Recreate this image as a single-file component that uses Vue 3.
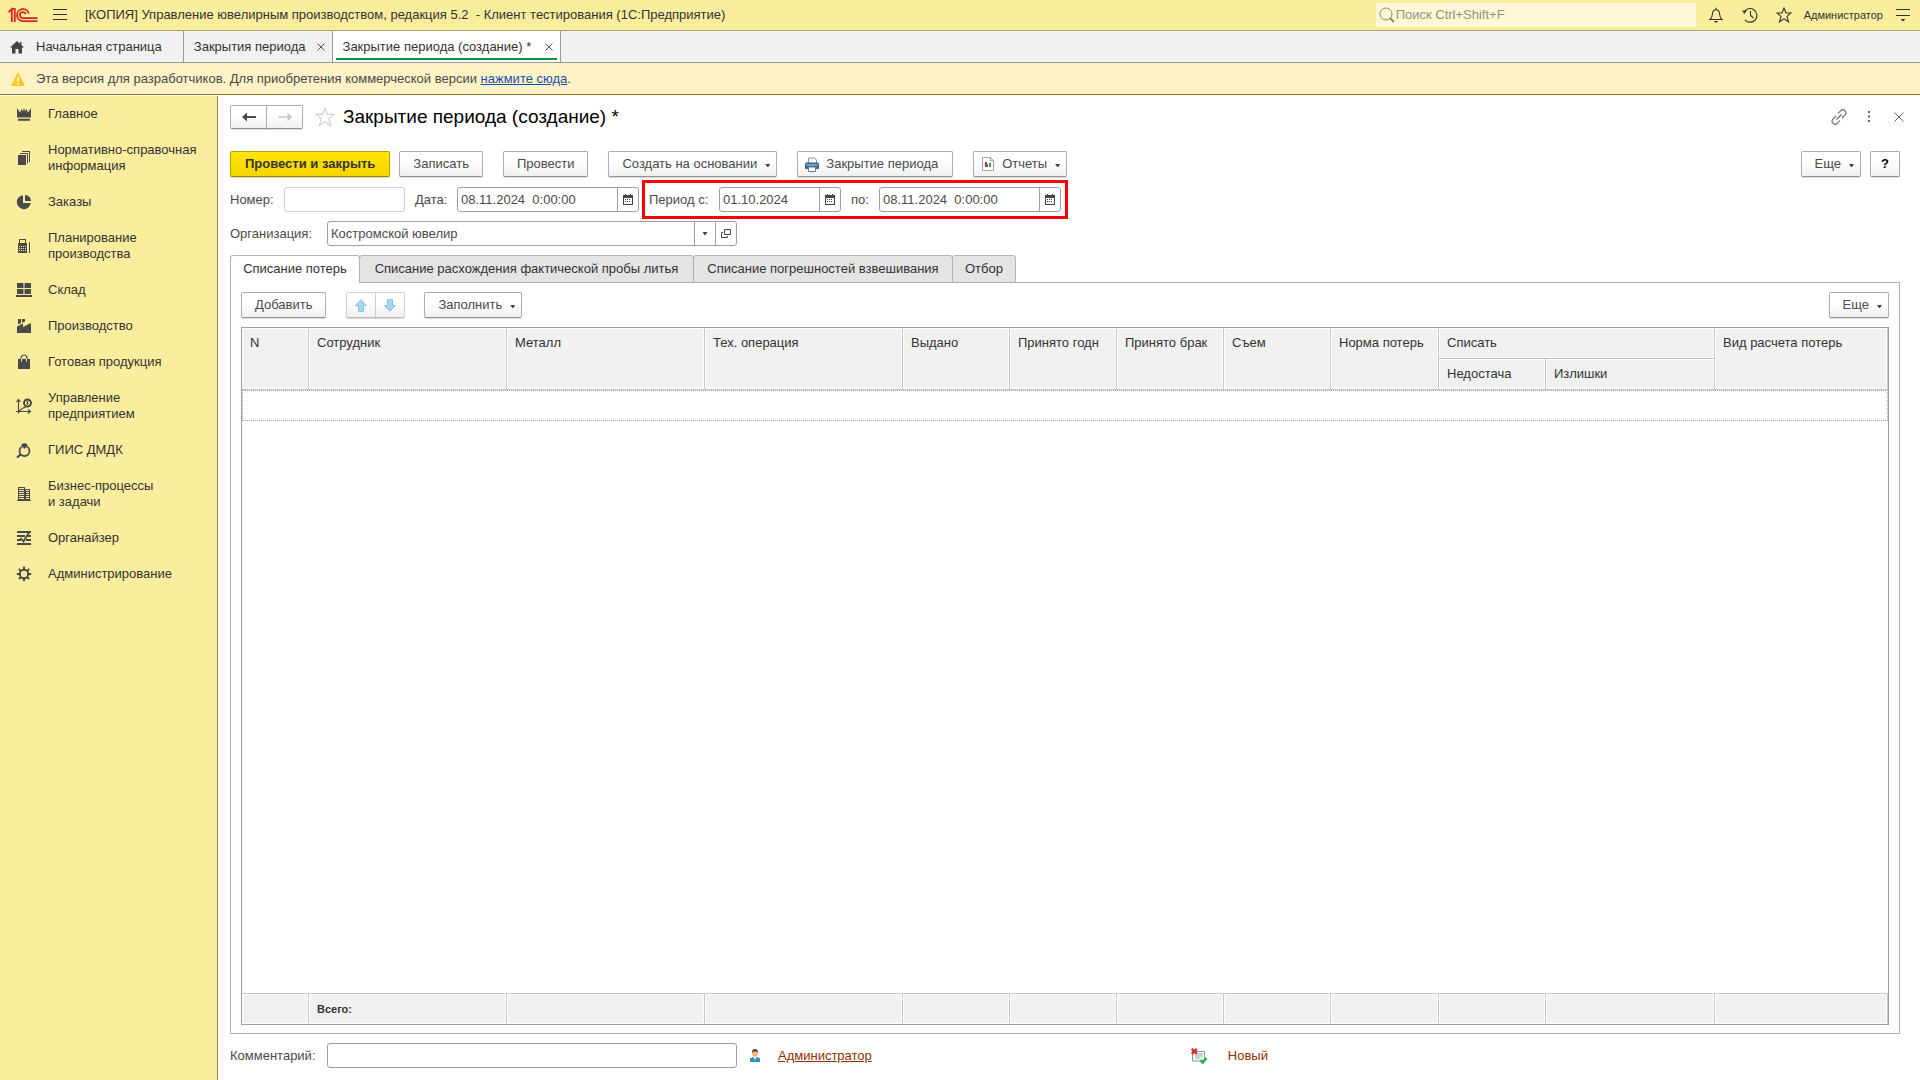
<script setup>
import { ref } from 'vue'

const sections = [
  { icon: 'crown', lines: ['Главное'] },
  { icon: 'books', lines: ['Нормативно-справочная', 'информация'] },
  { icon: 'pie', lines: ['Заказы'] },
  { icon: 'calc', lines: ['Планирование', 'производства'] },
  { icon: 'stock', lines: ['Склад'] },
  { icon: 'factory', lines: ['Производство'] },
  { icon: 'bag', lines: ['Готовая продукция'] },
  { icon: 'chart', lines: ['Управление', 'предприятием'] },
  { icon: 'ring', lines: ['ГИИС ДМДК'] },
  { icon: 'building', lines: ['Бизнес-процессы', 'и задачи'] },
  { icon: 'organizer', lines: ['Органайзер'] },
  { icon: 'gear', lines: ['Администрирование'] },
]

const pages = ['Списание потерь', 'Списание расхождения фактической пробы литья', 'Списание погрешностей взвешивания', 'Отбор']
const activePage = ref(0)

const columns = ['N', 'Сотрудник', 'Металл', 'Тех. операция', 'Выдано', 'Принято годн', 'Принято брак', 'Съем', 'Норма потерь']

const number = ref('')
const date = ref('08.11.2024  0:00:00')
const periodFrom = ref('01.10.2024')
const periodTo = ref('08.11.2024  0:00:00')
const organization = ref('Костромской ювелир')
const comment = ref('')

const calendarFrame = 'M0 1h2V0h1v1h4V0h1v1h2v10H0zM1 4v6h8V4z'
const calendarDays = 'M2 5.5h6M2 7.5h6'
</script>

<template>
  <div class="app">
    <header class="titlebar">
      <svg class="logo" width="30" height="16" viewBox="0 0 30 16" fill="none" stroke="#d9241c" stroke-width="1.8">
        <path d="M.5 5.200 3.800 2V15M6.800 15V1.900H3.500" />
        <path d="M20.800 6.400A6 6 0 1 0 15 14.100H29.500" />
        <path d="M17.800 7.200A3 3 0 1 0 15 11.100H29.500" />
      </svg>
      <button class="icon-btn burger" aria-label="Меню">
        <svg width="14" height="12" viewBox="0 0 14 12" stroke="#333" stroke-width="1"><path d="M0 .5h14M0 5.5h14M0 10.5h14" /></svg>
      </button>
      <span class="app-title">[КОПИЯ] Управление ювелирным производством, редакция 5.2&nbsp; - Клиент тестирования (1С:Предприятие)</span>
      <label class="search">
        <svg width="16" height="16" viewBox="0 0 16 16" fill="none" stroke="#8d8a72"><circle cx="7" cy="7" r="6" /><path d="M11 11l4 4" stroke-width="2" /></svg>
        <input type="text" aria-label="Поиск" placeholder="Поиск Ctrl+Shift+F" />
      </label>
      <button class="icon-btn" aria-label="Оповещения">
        <svg width="16" height="16" viewBox="0 0 16 16" fill="none" stroke="#333" stroke-width="1.1"><path d="M1 12.5h14M2.5 12.3C4 10.5 4.200 9 4.500 6.500 4.800 4 6 2.800 8 2.800s3.200 1.200 3.500 3.700c.3 2.500.5 4 2 5.800M8 .8v2" /><path d="M6 14h4l-1 1.500H7z" fill="#333" stroke="none" /></svg>
      </button>
      <button class="icon-btn" aria-label="История">
        <svg width="16" height="16" viewBox="0 0 16 16" fill="none" stroke="#333" stroke-width="1.1"><path d="M2 5.500A6.800 6.800 0 1 1 3 12.800M8.500 4v4.500l3 2.500" /><path d="M.2 3.500h4.600L2.300 7z" fill="#333" stroke="none" /></svg>
      </button>
      <button class="icon-btn" aria-label="Избранное">
        <svg width="16" height="16" viewBox="0 0 16 16" fill="none" stroke="#333" stroke-width="1.100"><path d="M8 1l2 5h5l-4 3.400 1.500 5.400L8 11.800l-4.500 3L5 9.400 1 6h5z" /></svg>
      </button>
      <a class="user" href="#">Администратор</a>
      <button class="icon-btn" aria-label="Настройки">
        <svg width="14" height="14" viewBox="0 0 14 14"><path d="M0 1.500h14M0 7.500h14" stroke="#333" /><path d="M4.500 11h5L7 13.500z" fill="#333" /></svg>
      </button>
    </header>

    <nav class="windows">
      <a class="window home" href="#">
        <svg width="14" height="14" viewBox="0 0 14 14" fill="#444"><path d="M7 1 0 7.500h2V13.500h3.500V9h3v4.500H12V7.500h2L11.500 5.100V2h-1.500v1.700z" /></svg>
        <span>Начальная страница</span>
      </a>
      <a class="window" href="#">
        <span>Закрытия периода</span>
        <svg width="8" height="8" viewBox="0 0 8 8" stroke="#555"><path d="M.5.5l7 7M7.500.5l-7 7" /></svg>
      </a>
      <a class="window current" href="#">
        <span>Закрытие периода (создание) *</span>
        <svg width="8" height="8" viewBox="0 0 8 8" stroke="#555"><path d="M.5.5l7 7M7.500.5l-7 7" /></svg>
      </a>
    </nav>

    <div class="notice">
      <svg width="14" height="14" viewBox="0 0 14 14"><path d="M7 0l7 14H0z" fill="#fdc820" /><path d="M6.200 5h1.600v4.500H6.200zM6.200 10.800h1.600v1.600H6.200z" fill="#fff" /></svg>
      <p>Эта версия для разработчиков. Для приобретения коммерческой версии <a href="#">нажмите сюда</a>.</p>
    </div>

    <div class="body">
      <aside class="sidebar">
        <a v-for="s in sections" :key="s.icon" class="section" href="#">
          <svg class="section-icon" width="16" height="16" viewBox="0 0 16 16" fill="#4a4a4a">
            <path v-if="s.icon === 'crown'" d="M1 2l3 4.500L5.500 3 7 5.500 8 1.500l1 4L10.500 3 12 6.500 15 2v9.500H1zM2 12.800h12v2H2z" />
            <g v-else-if="s.icon === 'books'"><path d="M2 5h8v10H2zM4 3h8v10.500h-1V4H4zM6 1h8v11h-1V2H6z" /></g>
            <g v-else-if="s.icon === 'pie'"><path d="M7 1.200V9h7.800A7 7 0 1 1 7 1.200z" /><path d="M9 1a6 6 0 0 1 6 6H9z" /></g>
            <g v-else-if="s.icon === 'calc'">
              <path fill-rule="evenodd" d="M2 5h1V1h7v4h1v10H2zM4 2v3h5V2zM3 8v1h1V8zm2 0v1h1V8zm2 0v1h1V8zm2 0v1h1V8zm-6 2v1h1v-1zm2 0v1h1v-1zm2 0v1h1v-1zm2 0v1h1v-1zm-6 2v1h1v-1zm2 0v1h1v-1zm2 0v1h1v-1zm2 0v1h1v-1z" />
              <path d="M13 4h1v11h-1z" />
            </g>
            <path v-else-if="s.icon === 'stock'" d="M1 1h6.500v5H1zM8.500 1H15v5H8.500zM1 7h6.500v5H1zM8.500 7H15v5H8.500zM0 13h16v2H0z" />
            <path v-else-if="s.icon === 'factory'" d="M2 1h3v4L2 6.500zM6 1h3v2.500L6 4.800zM1 8.500l6-3V9l8-4v10H1z" />
            <g v-else-if="s.icon === 'bag'"><path d="M2 5h12v10H2z" /><path d="M5 5V4a3 3 0 0 1 6 0v1" fill="none" stroke="#4a4a4a" stroke-width="1.200" /><path d="M5.500 5v2.500M10.500 5v2.500" stroke="#fbed9e" /></g>
            <g v-else-if="s.icon === 'chart'" fill="none" stroke="#4a4a4a">
              <path d="M2.500 15.500V2M.5 4l2-2.500 2 2.500M0 13.500h14M12 11.500l2.500 2-2.500 2M3 13l4-3 3-1" stroke-width="1.200" />
              <circle cx="11.500" cy="5" r="3.500" stroke-width="2" /><path d="M10.500 3.500h2M10.500 5.500h2M11.500 3v4" />
            </g>
            <g v-else-if="s.icon === 'ring'"><circle cx="8.500" cy="9" r="5" fill="none" stroke="#4a4a4a" stroke-width="1.800" /><path d="M5 4V3l2-2h3l2 2v1L8.500 7z" stroke="#fbed9e" stroke-width=".6" /><path d="M4.500 12.500 1 15.500" stroke="#4a4a4a" stroke-width="2.200" /></g>
            <path v-else-if="s.icon === 'building'" fill-rule="evenodd" d="M2 1h7v2h5v11h1v1H1v-1h1zM3 2v1h5V2zm0 2v1h5V4zm0 2v1h5V6zm0 2v1h5V8zm0 2v1h5v-1zm0 2v1h5v-1zM10 4v1h3V4zm0 2v1h3V6zm0 2v1h3V8zm0 2v1h3v-1zm0 2v1h3v-1z" />
            <g v-else-if="s.icon === 'organizer'"><path d="M1 1h14v2H1zM1 5h8v2H1zM12 5h3v2h-3zM1 9h4v2H1zM10 9h5v2h-5zM1 13h14v2H1z" /><path d="M4.500 8l3 3.500L13 2.500" fill="none" stroke="#4a4a4a" stroke-width="1.800" /></g>
            <g v-else fill="none" stroke="#4a4a4a"><circle cx="8" cy="8" r="4.200" stroke-width="2" /><path d="M8 .8v2.400M8 12.800v2.400M.8 8h2.400M12.800 8h2.400M2.900 2.900l1.700 1.700M11.400 11.400l1.700 1.700M2.900 13.100l1.700-1.700M11.400 4.600l1.700-1.700" stroke-width="2" /></g>
          </svg>
          <span><template v-for="(line, i) in s.lines" :key="line"><br v-if="i" />{{ line }}</template></span>
        </a>
      </aside>

      <main class="form">
        <div class="form-head">
          <div class="pair">
            <button class="btn nav-btn" aria-label="Назад"><svg width="14" height="10" viewBox="0 0 14 10"><path d="M5 .5V4h9v2H5v3.500L0 5z" fill="#4a4a4a" /></svg></button>
            <button class="btn nav-btn" aria-label="Вперед" disabled><svg width="14" height="10" viewBox="0 0 14 10"><path d="M9.500 .5V4.300H0v1.400h9.500v3.800L14 5z" fill="#c6c6c6" /></svg></button>
          </div>
          <button class="icon-btn fav" aria-label="В избранное">
            <svg width="20" height="20" viewBox="0 0 20 20" fill="none" stroke="#cfcfcf" stroke-width="1.100"><path d="M10 1l2.400 6.400H19l-5.300 4.200 2 7L10 14.600l-5.700 4 2-7L1 7.400h6.600z" /></svg>
          </button>
          <h1>Закрытие периода (создание) *</h1>
          <div class="head-tools">
            <button class="icon-btn" aria-label="Ссылка"><svg width="16" height="16" viewBox="0 0 16 16" fill="none" stroke="#666" stroke-width="1.100"><path d="M7 4.500l2.500-2.700a2.900 2.900 0 0 1 4.600 0 3 3 0 0 1 0 4L11 9M9 11.500l-2.500 2.700a2.900 2.900 0 0 1-4.600 0 3 3 0 0 1 0-4L5 7M5.500 10.500l5-5" /></svg></button>
            <button class="icon-btn dots" aria-label="Дополнительно"><svg width="4" height="12" viewBox="0 0 4 12" fill="#666"><path d="M1 0h2v2H1zM1 4.500h2v2H1zM1 9h2v2H1z" /></svg></button>
            <button class="icon-btn" aria-label="Закрыть"><svg width="10" height="10" viewBox="0 0 10 10" stroke="#666"><path d="M.5.5l9 9M9.500.5l-9 9" /></svg></button>
          </div>
        </div>

        <div class="commands">
          <button class="btn primary">Провести и закрыть</button>
          <button class="btn">Записать</button>
          <button class="btn spaced">Провести</button>
          <button class="btn menu spaced">Создать на основании<i class="caret"></i></button>
          <button class="btn print spaced">
            <svg width="14" height="15" viewBox="0 0 14 15"><path d="M3.500 6V1h6l2 2v3" fill="#fff" stroke="#7c93a6" /><path d="M1 5.500h12l1 1.500v5H0V7z" fill="#376a94" /><path d="M1.500 8h11" stroke="#b9d3e6" /><path d="M3.500 10h7v4.500h-7z" fill="#fff" stroke="#5c7f9b" /></svg>
            Закрытие периода
          </button>
          <button class="btn menu spaced reports">
            <svg width="12" height="14" viewBox="0 0 12 14"><path d="M.5.5h8l3 3v10H.5z" fill="#fff" stroke="#9aa6b2" /><path d="M8.500.5v3h3" fill="none" stroke="#9aa6b2" /><path d="M3 5h2v5H3z" fill="#d8292f" /><path d="M5 7h1v3H5z" fill="#3f66b5" /><path d="M7 6h2v4H7z" fill="#2ba84a" /></svg>
            Отчеты<i class="caret"></i>
          </button>
          <button class="btn menu more">Еще<i class="caret"></i></button>
          <button class="btn help" aria-label="Справка">?</button>
        </div>

        <div class="fields">
          <label class="l-number" for="number">Номер:</label>
          <input id="number" v-model="number" class="box number" type="text" />
          <label class="l-date" for="date">Дата:</label>
          <div class="box combo datetime">
            <input id="date" v-model="date" type="text" />
            <button aria-label="Выбрать дату"><svg width="10" height="11" viewBox="0 0 10 11"><path fill-rule="evenodd" :d="calendarFrame" fill="#444" /><path :d="calendarDays" stroke="#444" stroke-dasharray="1 1" /></svg></button>
          </div>
          <div class="period">
            <label class="l-from" for="from">Период с:</label>
            <div class="box combo day">
              <input id="from" v-model="periodFrom" type="text" />
              <button aria-label="Выбрать начало"><svg width="10" height="11" viewBox="0 0 10 11"><path fill-rule="evenodd" :d="calendarFrame" fill="#444" /><path :d="calendarDays" stroke="#444" stroke-dasharray="1 1" /></svg></button>
            </div>
            <label class="l-to" for="to">по:</label>
            <div class="box combo datetime">
              <input id="to" v-model="periodTo" type="text" />
              <button aria-label="Выбрать конец"><svg width="10" height="11" viewBox="0 0 10 11"><path fill-rule="evenodd" :d="calendarFrame" fill="#444" /><path :d="calendarDays" stroke="#444" stroke-dasharray="1 1" /></svg></button>
            </div>
          </div>
        </div>

        <div class="org-row">
          <label class="l-wide" for="org">Организация:</label>
          <div class="box combo wide">
            <input id="org" v-model="organization" type="text" />
            <button aria-label="Выбрать из списка"><i class="caret flat"></i></button>
            <button aria-label="Открыть"><svg width="10" height="9" viewBox="0 0 10 9" fill="none" stroke="#444"><path d="M3.500.5h6v5h-6zM2 3.500H.5v5h6V7" /></svg></button>
          </div>
        </div>

        <div class="pages" role="tablist">
          <button v-for="(p, i) in pages" :key="p" role="tab" class="page" :class="{ active: i === activePage }" :aria-selected="i === activePage" @click="activePage = i">{{ p }}</button>
        </div>

        <section class="panel">
          <div class="panel-commands">
            <button class="btn">Добавить</button>
            <div class="pair arrows">
              <button class="btn faded" aria-label="Вверх"><svg width="12" height="13" viewBox="0 0 12 13"><path d="M6 .7 11.300 6.500H8.500v5.800h-5V6.500H.7z" fill="#a5d6f2" stroke="#8cbcd9" /></svg></button>
              <button class="btn faded" aria-label="Вниз"><svg width="12" height="13" viewBox="0 0 12 13"><path d="M6 12.300 11.300 6.500H8.500V.7h-5v5.800H.7z" fill="#a5d6f2" stroke="#8cbcd9" /></svg></button>
            </div>
            <button class="btn menu">Заполнить<i class="caret"></i></button>
            <button class="btn menu more">Еще<i class="caret"></i></button>
          </div>

          <table class="grid">
            <colgroup>
              <col class="c-n" /><col class="c-text" /><col class="c-text" /><col class="c-text" />
              <col class="c-num" /><col class="c-num" /><col class="c-num" /><col class="c-num" /><col class="c-norm" /><col class="c-num" />
              <col class="c-extra" /><col />
            </colgroup>
            <thead>
              <tr>
                <th v-for="c in columns" :key="c" rowspan="2">{{ c }}</th>
                <th colspan="2">Списать</th>
                <th rowspan="2">Вид расчета потерь</th>
              </tr>
              <tr>
                <th>Недостача</th>
                <th>Излишки</th>
              </tr>
            </thead>
            <tbody>
              <tr class="blank"><td colspan="12"></td></tr>
              <tr class="rest"><td colspan="12"></td></tr>
            </tbody>
            <tfoot>
              <tr><td></td><td>Всего:</td><td v-for="n in 10" :key="n"></td></tr>
            </tfoot>
          </table>
        </section>

        <footer class="bottom">
          <label class="l-wide" for="comment">Комментарий:</label>
          <input id="comment" v-model="comment" class="box wide" type="text" />
          <svg class="person" width="10" height="13" viewBox="0 0 10 13"><path d="M0 13V9.500L2.500 8h5L10 9.500V13z" fill="#3692c4" /><path d="M3.500 8 5 11l1.500-3z" fill="#fff" /><ellipse cx="5" cy="4.300" rx="2.700" ry="3.500" fill="#edb765" /><path d="M2 4.500C1.500 1.500 3 0 5 0s3.500 1.500 3 4.500L7 2.500H3z" fill="#4b4036" /></svg>
          <a class="author" href="#">Администратор</a>
          <svg class="state" width="16" height="16" viewBox="0 0 16 16" fill="none"><path d="M1.500 3.500h12v9.500h-12z" fill="#f4f7fb" stroke="#8195ad" /><path d="M5 6h6.500M4 8h7.500M4 10h5" stroke="#93a5bb" /><path d="M.8.8l5 5M5.800.8l-5 5" stroke="#dc2a2a" stroke-width="2.400" /><path d="M9.500 12l2.300 2.500 3.700-4.500" stroke="#20b030" stroke-width="2.400" /></svg>
          <span class="status">Новый</span>
        </footer>
      </main>
    </div>
  </div>
</template>

<style>
body {
  margin: 0;
}
</style>

<style scoped>
.app,
.app * {
  box-sizing: border-box;
}
.app {
  display: flex;
  flex-direction: column;
  min-height: 100vh;
  background: #fff;
  color: #333;
  font: 13px/16px 'Liberation Sans', Arial, sans-serif;
}
.app svg {
  display: block;
  flex: none;
}
button,
input {
  font: inherit;
  color: inherit;
  margin: 0;
}
a {
  color: inherit;
  text-decoration: none;
}
.icon-btn {
  display: flex;
  padding: 0;
  border: 0;
  background: none;
}

.titlebar {
  display: flex;
  align-items: center;
  height: 31px;
  padding: 0 10px 0 8px;
  background: #fbed9e;
  border-bottom: 1px solid #aea56c;
}
.burger {
  margin: 0 18px 0 15px;
}
.app-title {
  flex: 1;
  white-space: nowrap;
}
.search {
  display: flex;
  align-items: center;
  gap: 1px;
  width: 320px;
  height: 24px;
  margin-right: 12px;
  padding-left: 3px;
  border-radius: 2px;
  background: #fef7d8;
}
.search input {
  flex: 1;
  min-width: 0;
  padding: 0;
  border: 0;
  outline: 0;
  background: none;
}
.search input::placeholder {
  color: #96927c;
}
.titlebar .icon-btn + .icon-btn {
  margin-left: 18px;
}
.user {
  margin: 0 13px 0 12px;
  font-size: 11px;
}

.windows {
  display: flex;
  height: 32px;
  background: #f1f1f1;
  border-bottom: 1px solid #9a9a9a;
}
.window {
  display: flex;
  align-items: center;
  gap: 11px;
  padding: 0 7px 0 10px;
  border-right: 1px solid #9a9a9a;
  white-space: nowrap;
}
.window.home {
  gap: 12px;
  padding-right: 21px;
}
.window.current {
  gap: 14px;
  background: linear-gradient(#009646, #009646) center bottom 2px / calc(100% - 6px) 2px no-repeat #fff;
}

.notice {
  display: flex;
  align-items: center;
  gap: 11px;
  height: 32px;
  padding-left: 11px;
  background: #fef2c7;
  border-bottom: 1px solid #967a1b;
  color: #4a4a4a;
}
.notice p {
  margin: 0;
}
.notice a {
  color: #1b50b0;
  text-decoration: underline;
}

.body {
  display: flex;
  flex: 1;
  padding-top: 1px;
}
.sidebar {
  flex: none;
  width: 218px;
  background: #fbed9e;
  border-right: 1px solid #8f8a5e;
}
.section {
  display: flex;
  align-items: center;
  gap: 16px;
  padding: 10px 0 10px 16px;
  white-space: nowrap;
}

.form {
  display: flex;
  flex: 1;
  flex-direction: column;
  min-width: 0;
  padding: 9px 20px 12px 12px;
  color: #4a4a4a;
}
.form-head {
  display: flex;
  align-items: center;
  height: 24px;
  margin-bottom: 22px;
}
.pair {
  display: flex;
}
.pair .btn:first-child {
  border-radius: 2px 0 0 2px;
}
.pair .btn:last-child {
  margin-left: -1px;
  border-radius: 0 2px 2px 0;
}
.btn {
  display: flex;
  align-items: center;
  justify-content: center;
  height: 26px;
  padding: 0 13px;
  border: 1px solid #adadad;
  border-bottom-color: #929292;
  border-radius: 2px;
  background: linear-gradient(#fff 40%, #f0f0f0);
  box-shadow: 0 1px 1px rgba(0, 0, 0, 0.15);
  white-space: nowrap;
}
.nav-btn {
  width: 37px;
  height: 24px;
  padding: 0;
}
.fav {
  margin: 0 8px 0 12px;
}
h1 {
  flex: 1;
  margin: 0;
  color: #000;
  font-size: 19px;
  font-weight: 400;
  line-height: 24px;
}
.head-tools {
  display: flex;
  align-items: center;
  margin-right: -4px;
}
.dots {
  margin: 0 23px 0 20px;
}

.commands,
.panel-commands {
  display: flex;
  align-items: center;
}
.commands {
  margin-bottom: 3px;
}
.primary {
  margin-right: 9px;
  padding: 0 14px;
  border-color: #b59f0a;
  border-bottom-color: #998500;
  background: linear-gradient(#ffe600, #f5d500);
  color: #333;
  font-weight: 700;
}
.spaced {
  margin-left: 20px;
}
.menu {
  padding-right: 6px;
}
.caret {
  width: 5px;
  height: 3px;
  margin: 3px 0 0 8px;
  background: #444;
  clip-path: polygon(0 0, 100% 0, 60% 100%, 40% 100%);
}
.caret.flat {
  margin: 0;
}
.print {
  gap: 7px;
  padding: 0 14px 0 7px;
}
.reports {
  gap: 8px;
  padding-left: 8px;
}
.reports .caret {
  margin-left: 0;
}
.more {
  margin-left: auto;
}
.help {
  width: 30px;
  margin-left: 9px;
  padding: 0;
  color: #000;
  font-weight: 700;
}

.fields {
  display: flex;
  align-items: center;
}
.box {
  height: 25px;
  border: 1px solid #a0a0a0;
  border-radius: 3px;
  background: #fff;
}
input.box {
  padding: 0 3px;
}
.combo {
  display: flex;
  overflow: hidden;
}
.combo input {
  flex: 1;
  min-width: 0;
  padding: 0 3px;
  border: 0;
  outline: 0;
  background: none;
}
.combo button {
  display: flex;
  align-items: center;
  justify-content: center;
  flex: none;
  width: 21px;
  padding: 0;
  border: 0;
  border-left: 1px solid #a0a0a0;
  background: none;
}
.number {
  width: 121px;
  margin-right: 10px;
  border-color: #ccc;
}
.datetime {
  width: 182px;
}
.day {
  width: 122px;
  margin-right: 10px;
}
.wide {
  width: 410px;
}
.l-number {
  width: 54px;
}
.l-date {
  width: 42px;
}
.l-from {
  width: 70px;
}
.l-to {
  width: 28px;
}
.l-wide {
  width: 97px;
}
.period {
  display: flex;
  align-items: center;
  height: 39px;
  margin-left: 3px;
  padding: 0 4px;
  border: 3px solid #f00;
}
.org-row {
  display: flex;
  align-items: center;
  margin: 2px 0 9px;
}

.pages {
  display: grid;
  position: relative;
  grid-template-columns: 129px 334px 259px 63px;
  margin-bottom: -1px;
}
.page {
  height: 28px;
  margin-right: -1px;
  padding: 0;
  border: 1px solid #b3b3b3;
  border-radius: 3px 3px 0 0;
  background: #e4e4e4;
  color: #333;
  white-space: nowrap;
}
.page.active {
  border-bottom-color: #fff;
  background: #fff;
}

.panel {
  display: flex;
  flex: 1;
  flex-direction: column;
  padding: 9px 10px 8px;
  border: 1px solid #b3b3b3;
}
.panel-commands {
  margin-bottom: 9px;
}
.arrows {
  margin: 0 19px 0 20px;
}
.arrows .btn {
  width: 30px;
  padding: 0;
}
.faded {
  border-color: #d0d0d0;
  border-bottom-color: #bcbcbc;
}

.grid {
  flex: 1;
  width: 100%;
  table-layout: fixed;
  border: 1px solid #9c9c9c;
  border-collapse: separate;
  border-spacing: 0;
  color: #333;
}
.c-n {
  width: 67px;
}
.c-text {
  width: 198px;
}
.c-num {
  width: 107px;
}
.c-norm {
  width: 108px;
}
.c-extra {
  width: 169px;
}
.grid th,
.grid tfoot td {
  height: 31px;
  padding: 0 8px;
  border-right: 1px solid #c8c8c8;
  background: #f1f1f1;
  box-shadow: inset 0 0 0 1px #fff;
  text-align: left;
  white-space: nowrap;
}
.grid th {
  padding-top: 7px;
  border-bottom: 1px solid #c4c4c4;
  font-weight: 400;
  vertical-align: top;
}
.grid tfoot td {
  border-top: 1px solid #c8c8c8;
  font-size: 11px;
  font-weight: 700;
}
.blank td {
  height: 31px;
  padding: 0;
  border: 1px dotted #a0a0a0;
}
.rest td {
  padding: 0;
}

.bottom {
  display: flex;
  align-items: center;
  margin-top: 9px;
}
.person {
  margin: 0 18px 0 13px;
}
.author {
  color: #8f2f00;
  text-decoration: underline;
}
.state {
  margin: 0 21px 0 319px;
}
.status {
  color: #8f2f00;
}
</style>
